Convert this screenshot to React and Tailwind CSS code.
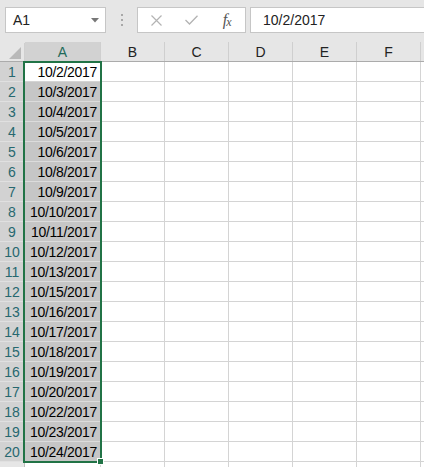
import React from "react";

const dates = [
  "10/2/2017","10/3/2017","10/4/2017","10/5/2017","10/6/2017","10/8/2017","10/9/2017",
  "10/10/2017","10/11/2017","10/12/2017","10/13/2017","10/15/2017","10/16/2017","10/17/2017",
  "10/18/2017","10/19/2017","10/20/2017","10/22/2017","10/23/2017","10/24/2017",
];
const cols = ["B", "C", "D", "E", "F"];

export default function App() {
  return (
    <div className="w-[424px] h-[467px] overflow-hidden bg-white font-['Liberation_Sans',Arial,sans-serif] text-[14px] text-[#222]">
      {/* toolbar */}
      <div className="h-[42px] bg-[#e6e6e6] flex items-start pt-[7px] pl-[5px]">
        <div className="relative w-[101px] h-[26px] bg-white border border-[#c6c6c6] flex items-center pl-[7px] text-[14px] text-[#222]">
          A1
          <svg className="absolute right-[6px] top-[10px]" width="8" height="5" viewBox="0 0 8 5">
            <path d="M0 0 L8 0 L4 4.5 Z" fill="#777" />
          </svg>
        </div>
        <div className="w-[31px] h-[26px] flex flex-col items-center justify-center gap-[3px]">
          <div className="w-[2px] h-[2px] bg-[#a8a8a8]" />
          <div className="w-[2px] h-[2px] bg-[#a8a8a8]" />
          <div className="w-[2px] h-[2px] bg-[#a8a8a8]" />
        </div>
        <div className="w-[109px] h-[26px] bg-white border border-[#c6c6c6] flex items-center">
          <div className="w-[36px] flex justify-center pl-[2px]">
            <svg width="11" height="11" viewBox="0 0 11 11">
              <path d="M0.5 0.5 L10.5 10.5 M10.5 0.5 L0.5 10.5" stroke="#b3b3b3" strokeWidth="1.2" fill="none" />
            </svg>
          </div>
          <div className="w-[36px] flex justify-center">
            <svg width="13" height="10" viewBox="0 0 13 10">
              <path d="M0.5 5 L4.5 9 L12.5 0.8" stroke="#b3b3b3" strokeWidth="1.3" fill="none" />
            </svg>
          </div>
          <div className="w-[36px] flex justify-center items-end font-['Liberation_Serif',serif] italic text-[16px] text-[#555] leading-none">
            f<span className="text-[12px] -ml-[1px]">x</span>
          </div>
        </div>
        <div className="ml-[4px] flex-1 -mr-[2px] h-[26px] bg-white border border-[#c6c6c6] flex items-center pl-[12px] text-[14px] text-[#222]">
          10/2/2017
        </div>
      </div>

      {/* grid */}
      <div className="bg-[#e6e6e6]">
        {/* column header */}
        <div className="flex h-[20px] border-b border-[#ababab]">
          <div className="w-[25px] h-full relative border-r border-[#cfcfcf] mt-[1px]">
            <svg className="absolute right-[3px] bottom-[3px]" width="12" height="12" viewBox="0 0 12 12">
              <path d="M12 0 L12 12 L0 12 Z" fill="#b9b9b9" />
            </svg>
          </div>
          <div className="w-[76px] h-full bg-[#d2d2d2] border-r border-[#cfcfcf] flex items-center justify-center text-[#1f6a5a] pt-[1px]">
            A
          </div>
          {cols.map((c) => (
            <div key={c} className="w-[64px] h-full shrink-0 border-r border-[#cfcfcf] flex items-center justify-center text-[#222] pt-[1px]">
              {c}
            </div>
          ))}
          <div className="flex-1" />
        </div>

        {/* rows */}
        <div className="relative bg-white">
          {dates.map((d, i) => (
            <div key={d} className="flex h-[20px]">
              <div className="w-[25px] shrink-0 bg-[#d2d2d2] border-b border-r border-[#bdbdbd] border-b-[#e0e0e0] flex items-center justify-center text-[#27686f] text-[14px] pt-[1px]">
                {i + 1}
              </div>
              <div
                className={
                  "w-[76px] shrink-0 border-r border-b flex items-center justify-end pr-[3px] pt-[2px] tracking-[-0.3px] text-black " +
                  (i === 0 ? "bg-white border-[#d4d4d4]" : "bg-[#c6c6c6] border-[#d4d4d4] border-b-[#dcdcdc]")
                }
              >
                {d}
              </div>
              {cols.map((c) => (
                <div key={c} className="w-[64px] shrink-0 border-r border-b border-[#d4d4d4]" />
              ))}
              <div className="flex-1 border-b border-[#d4d4d4]" />
            </div>
          ))}
          <div className="flex h-[20px]">
            <div className="w-[25px] shrink-0 bg-[#e6e6e6] border-r border-[#bdbdbd]" />
            <div className="w-[76px] shrink-0 border-r border-[#d4d4d4]" />
            {cols.map((c) => (
              <div key={c} className="w-[64px] shrink-0 border-r border-[#d4d4d4]" />
            ))}
          </div>

          {/* selection overlay */}
          <div className="absolute left-[23px] top-[-1px] w-[79px] h-[402px] border-2 border-[#217346] pointer-events-none" />
          <div className="absolute left-[97px] top-[396px] w-[7px] h-[7px] bg-[#217346] border border-white pointer-events-none" />
        </div>
      </div>
    </div>
  );
}
